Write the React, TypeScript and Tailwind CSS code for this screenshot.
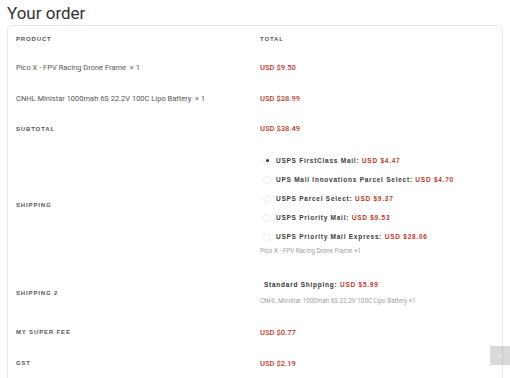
import { ChevronUp } from 'lucide-react';

// ====== Data ======
const items = [
  { name: 'Pico X - FPV Racing Drone Frame', qty: 1, price: 'USD $9.50' },
  { name: 'CNHL Ministar 1000mah 6S 22.2V 100C Lipo Battery', qty: 1, price: 'USD $28.99' },
];

const shippingOptions = [
  { label: 'USPS FirstClass Mail', price: 'USD $4.47', checked: true },
  { label: 'UPS Mail Innovations Parcel Select', price: 'USD $4.70', checked: false },
  { label: 'USPS Parcel Select', price: 'USD $9.37', checked: false },
  { label: 'USPS Priority Mail', price: 'USD $9.53', checked: false },
  { label: 'USPS Priority Mail Express', price: 'USD $28.06', checked: false },
];

const roboto = "font-['Roboto',sans-serif]";
const label = "font-['Liberation_Sans',Arial,sans-serif] font-bold uppercase text-[6px] tracking-[0.85px] text-[#555]";
const method = "font-['Liberation_Sans',Arial,sans-serif] font-bold text-[6.5px] tracking-[0.75px] text-[#3a3a3a]";
const price = `${roboto} font-medium text-[7.6px] text-[#b63b2b]`;
const note = `${roboto} text-[6.3px] text-[#a0a0a0]`;

function Row({ left, children, className = '' }: { left: React.ReactNode; children: React.ReactNode; className?: string }) {
  return (
    <div className={`grid grid-cols-[252px_1fr] ${className}`}>
      <div className="flex items-center px-2">{left}</div>
      <div className="flex flex-col justify-center">{children}</div>
    </div>
  );
}

function Radio({ checked }: { checked: boolean }) {
  return (
    <span className="flex h-[8px] w-[8px] shrink-0 items-center justify-center rounded-full border border-[#eee]">
      {checked && <span className="h-[3px] w-[3px] rounded-full bg-[#333]" />}
    </span>
  );
}

// ====== Main Export ======
export default function App() {
  return (
    <div className="relative h-[378px] w-[510px] overflow-hidden bg-white">
      <h2 className={`${roboto} px-[7px] pt-[2px] text-[17px] leading-[22px] text-[#333]`}>Your order</h2>
      <div className="mx-[7px] mt-[1px] rounded-[5px] border border-[#e8e8e8] pb-8">
        <Row left={<span className={label}>Product</span>} className="h-[26px]">
          <span className={label}>Total</span>
        </Row>
        {items.map((it) => (
          <Row key={it.name} left={<span className={`${roboto} text-[7.5px] text-[#555]`}>{it.name}&nbsp; × {it.qty}</span>} className="h-[31px]">
            <span className={price}>{it.price}</span>
          </Row>
        ))}
        <Row left={<span className={label}>Subtotal</span>} className="h-[30px]">
          <span className={price}>USD $38.49</span>
        </Row>
        <Row left={<span className={label}>Shipping</span>} className="h-[123px]">
          <div className="flex flex-col gap-[9px] pl-[3px] pt-[1px]">
            {shippingOptions.map((o) => (
              <div key={o.label} className="flex items-center gap-[5px] leading-[10px]">
                <Radio checked={o.checked} />
                <span className={method}>
                  {o.label}: <span className="text-[#b63b2b]">{o.price}</span>
                </span>
              </div>
            ))}
          </div>
          <span className={`${note} mt-[5px]`}>Pico X - FPV Racing Drone Frame ×1</span>
        </Row>
        <Row left={<span className={label}>Shipping 2</span>} className="h-[52px]">
          <span className={`${method} pl-[4px] text-[#333]`}>
            Standard Shipping: <span className="text-[#b63b2b]">USD $5.99</span>
          </span>
          <span className={`${note} mt-[7px]`}>CNHL Ministar 1000mah 6S 22.2V 100C Lipo Battery ×1</span>
        </Row>
        <Row left={<span className={label}>My super fee</span>} className="h-[27px]">
          <span className={price}>USD $0.77</span>
        </Row>
        <Row left={<span className={label}>GST</span>} className="h-[35px]">
          <span className={price}>USD $2.19</span>
        </Row>
      </div>
      <button className="absolute right-0 top-[346px] flex h-[19px] w-[20px] items-center justify-center bg-black/15 text-white/80">
        <ChevronUp size={8} strokeWidth={3} />
      </button>
    </div>
  );
}
